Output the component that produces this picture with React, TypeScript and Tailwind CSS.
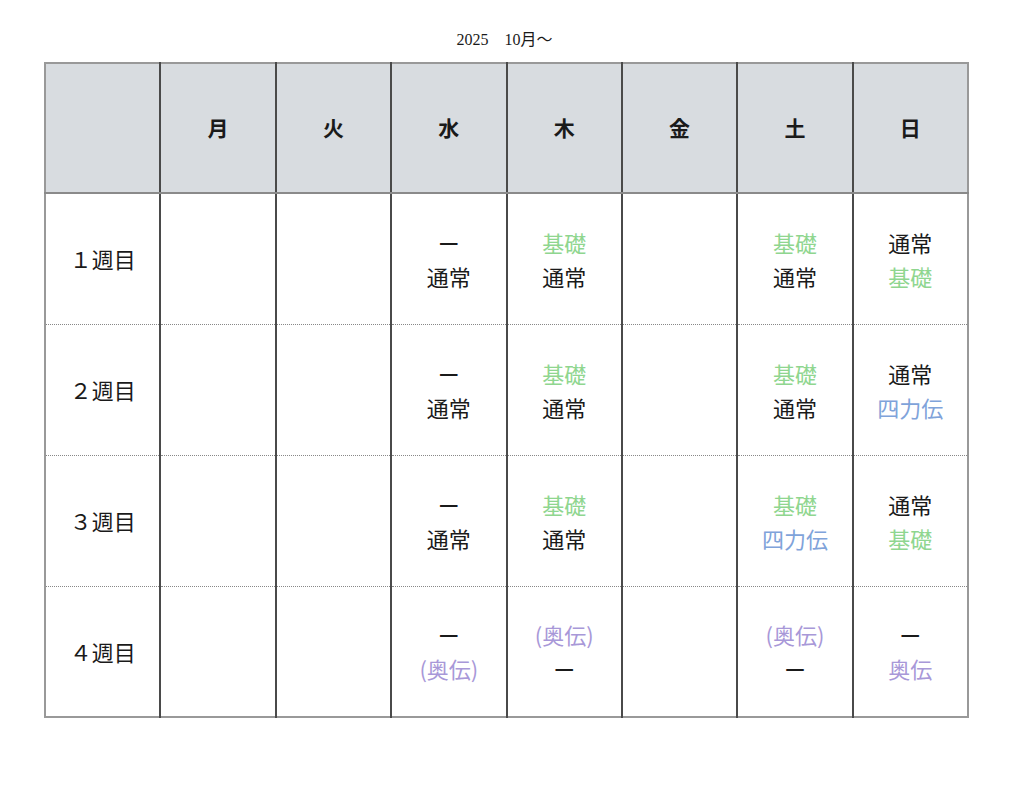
const days = ["月", "火", "水", "木", "金", "土", "日"];

type Line = { t: string; c?: "g" | "b" | "p" };

const color = {
  g: "text-[#8fd68f]",
  b: "text-[#7fa3da]",
  p: "text-[#a898d8]",
};

// each row: label + 7 cells
const weeks: { label: string; cells: Line[][] }[] = [
  {
    label: "１週目",
    cells: [
      [],
      [],
      [{ t: "ー" }, { t: "通常" }],
      [{ t: "基礎", c: "g" }, { t: "通常" }],
      [],
      [{ t: "基礎", c: "g" }, { t: "通常" }],
      [{ t: "通常" }, { t: "基礎", c: "g" }],
    ],
  },
  {
    label: "２週目",
    cells: [
      [],
      [],
      [{ t: "ー" }, { t: "通常" }],
      [{ t: "基礎", c: "g" }, { t: "通常" }],
      [],
      [{ t: "基礎", c: "g" }, { t: "通常" }],
      [{ t: "通常" }, { t: "四力伝", c: "b" }],
    ],
  },
  {
    label: "３週目",
    cells: [
      [],
      [],
      [{ t: "ー" }, { t: "通常" }],
      [{ t: "基礎", c: "g" }, { t: "通常" }],
      [],
      [{ t: "基礎", c: "g" }, { t: "四力伝", c: "b" }],
      [{ t: "通常" }, { t: "基礎", c: "g" }],
    ],
  },
  {
    label: "４週目",
    cells: [
      [],
      [],
      [{ t: "ー" }, { t: "(奥伝)", c: "p" }],
      [{ t: "(奥伝)", c: "p" }, { t: "ー" }],
      [],
      [{ t: "(奥伝)", c: "p" }, { t: "ー" }],
      [{ t: "ー" }, { t: "奥伝", c: "p" }],
    ],
  },
];

const App = () => {
  return (
    <div className="min-h-screen bg-white font-['Noto_Sans_CJK_JP',sans-serif] text-[#1a1a1a]">
      <div className="pt-[28px] pl-[44px] w-[969px]">
        <div className="h-[34px] text-center font-['Liberation_Serif','Noto_Sans_CJK_JP',serif] text-[16px] leading-[24px] pr-[4px]">
          2025　10月～
        </div>
        <table className="w-[925px] table-fixed border-collapse border-2 border-[#999]">
          <thead>
            <tr className="h-[130px] bg-[#d8dce0]">
              <th className="border-r-2 border-[#4a4a4a] border-b-2 border-b-[#8a8a8a]" />
              {days.map((d, i) => (
                <th
                  key={d}
                  className={`text-[21px] font-bold border-b-2 border-b-[#8a8a8a] ${
                    i < days.length - 1 ? "border-r-2 border-[#4a4a4a]" : ""
                  }`}
                >
                  {d}
                </th>
              ))}
            </tr>
          </thead>
          <tbody>
            {weeks.map((w, r) => (
              <tr
                key={w.label}
                className={`h-[131px] ${r < weeks.length - 1 ? "border-b border-dotted border-b-[#888]" : ""}`}
              >
                <td className="text-center text-[22px] border-r-2 border-[#4a4a4a]">{w.label}</td>
                {w.cells.map((lines, i) => (
                  <td
                    key={i}
                    className={`text-center text-[22px] leading-[34px] ${
                      i < w.cells.length - 1 ? "border-r-2 border-[#4a4a4a]" : ""
                    }`}
                  >
                    {lines.map((l, k) => (
                      <div key={k} className={l.c ? color[l.c] : ""}>
                        {l.t}
                      </div>
                    ))}
                  </td>
                ))}
              </tr>
            ))}
          </tbody>
        </table>
      </div>
    </div>
  );
};

export default App;
